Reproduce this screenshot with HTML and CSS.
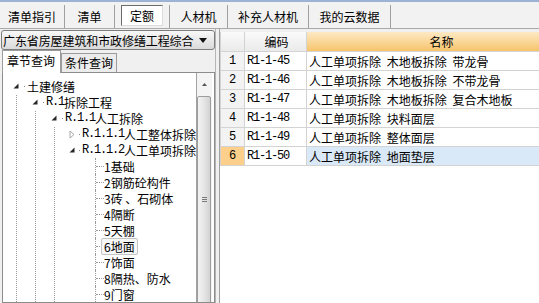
FILE: index.html
```html
<!DOCTYPE html>
<html lang="zh-CN">
<head>
    <meta charset="UTF-8">
    <title>定额</title>
    <link rel="stylesheet" href="styles.css">
</head>
<body>
    <div class="topbar">
        <div class="tab t1">清单指引</div>
        <div class="tab t2">清单</div>
        <div class="tab t3 on"><span>定额</span></div>
        <div class="tab t4">人材机</div>
        <div class="tab t5">补充人材机</div>
        <div class="tab t6">我的云数据</div>
    </div>

    <div class="main">
        <div class="left">
            <div class="combo">
                <span>广东省房屋建筑和市政修缮工程综合</span>
                <svg width="8" height="5" viewBox="0 0 8 5"><polygon points="0,0 8,0 4,5" fill="#111"/></svg>
            </div>
            <div class="qtabs">
                <div class="qtab on">章节查询</div>
                <div class="qtab">条件查询</div>
            </div>
            <div class="tree">
                <div class="nodes">
                    <ul>
                        <li>
                            <div class="row"><span class="tg"><svg width="6" height="6" viewBox="0 0 6 6"><polygon points="5.5,0.5 5.5,5.5 0.5,5.5" fill="#262626"/></svg></span><span class="dot"></span>土建修缮</div>
                            <ul>
                                <li>
                                    <div class="row"><span class="tg"><svg width="6" height="6" viewBox="0 0 6 6"><polygon points="5.5,0.5 5.5,5.5 0.5,5.5" fill="#262626"/></svg></span><span class="dot"></span><span class="code">R.1</span>拆除工程</div>
                                    <ul>
                                        <li>
                                            <div class="row"><span class="tg"><svg width="6" height="6" viewBox="0 0 6 6"><polygon points="5.5,0.5 5.5,5.5 0.5,5.5" fill="#262626"/></svg></span><span class="dot"></span><span class="code">R.1.1</span>人工拆除</div>
                                            <ul class="l3">
                                                <li>
                                                    <div class="row"><span class="tg"><svg width="6" height="9" viewBox="0 0 6 9"><polygon points="1,1 5,4.5 1,8" fill="#fff" stroke="#a8a8a8"/></svg></span><span class="dot"></span><span class="code">R.1.1.1</span>人工整体拆除</div>
                                                </li>
                                                <li class="last">
                                                    <div class="row"><span class="tg"><svg width="6" height="6" viewBox="0 0 6 6"><polygon points="5.5,0.5 5.5,5.5 0.5,5.5" fill="#262626"/></svg></span><span class="dot"></span><span class="code">R.1.1.2</span>人工单项拆除</div>
                                                    <ul class="leaves">
                                                        <li><div class="row"><span class="dash"></span>1基础</div></li>
                                                        <li><div class="row"><span class="dash"></span>2钢筋砼构件</div></li>
                                                        <li><div class="row"><span class="dash"></span>3砖 、石砌体</div></li>
                                                        <li><div class="row"><span class="dash"></span>4隔断</div></li>
                                                        <li><div class="row"><span class="dash"></span>5天棚</div></li>
                                                        <li><div class="row"><span class="dash"></span><span class="focus">6地面</span></div></li>
                                                        <li><div class="row"><span class="dash"></span>7饰面</div></li>
                                                        <li><div class="row"><span class="dash"></span>8隔热、防水</div></li>
                                                        <li><div class="row"><span class="dash"></span>9门窗</div></li>
                                                    </ul>
                                                </li>
                                            </ul>
                                        </li>
                                    </ul>
                                </li>
                            </ul>
                        </li>
                    </ul>
                </div>
                <div class="vscroll">
                    <div class="up"><svg width="5" height="3" viewBox="0 0 5 3"><polygon points="0,3 2.5,0 5,3" fill="#555"/></svg></div>
                    <div class="thumb"><span class="grip"></span></div>
                </div>
            </div>
        </div>

        <div class="split"></div>

        <div class="right">
            <div class="gridwrap">
                <table class="grid">
                    <colgroup><col class="c-num"><col class="c-code"><col class="c-name"></colgroup>
                    <tr class="head">
                        <th></th>
                        <th>编码</th>
                        <th class="cur">名称</th>
                    </tr>
                    <tr><td class="num">1</td><td class="code">R1-1-45</td><td>人工单项拆除 木地板拆除 带龙骨</td></tr>
                    <tr><td class="num">2</td><td class="code">R1-1-46</td><td>人工单项拆除 木地板拆除 不带龙骨</td></tr>
                    <tr><td class="num">3</td><td class="code">R1-1-47</td><td>人工单项拆除 木地板拆除 复合木地板</td></tr>
                    <tr><td class="num">4</td><td class="code">R1-1-48</td><td>人工单项拆除 块料面层</td></tr>
                    <tr><td class="num">5</td><td class="code">R1-1-49</td><td>人工单项拆除 整体面层</td></tr>
                    <tr class="sel"><td class="num">6</td><td class="code">R1-1-50</td><td class="name">人工单项拆除 地面垫层</td></tr>
                </table>
            </div>
        </div>
    </div>
</body>
</html>
```

FILE: styles.css
```css
body {
    margin: 0;
    width: 539px;
    height: 303px;
    overflow: hidden;
    background-color: #f0f0f0;
    font-family: "Noto Sans CJK SC", sans-serif;
    font-size: 12px;
    color: #000;
}

/* top tabs */
.topbar {
    display: flex;
    height: 26px;
    border-top: 2px solid #9db3d4;
    border-bottom: 1px solid #a9a9a9;
    background-color: #f2f2f2;
}
.tab {
    display: flex;
    align-items: center;
    justify-content: center;
    box-sizing: border-box;
    border-right: 1px solid #a0a0a0;
    margin: 3px 0 0;
}
.t1 { width: 65px; }
.t2 { width: 50px; }
.t3 { width: 55px; }
.t4 { width: 58px; }
.t5 { width: 81px; }
.t6 { width: 82px; }
.tab.on {
    align-items: flex-start;
}
.tab.on span {
    padding: 1px 8px 0;
    height: 18px;
    line-height: 18px;
    background-color: #fff;
    border: 1px solid;
    border-color: #6b6b6b #dcdcdc #dcdcdc #6b6b6b;
}

.main {
    display: flex;
    height: 274px;
}

/* left side */
.left {
    width: 214px;
    padding: 1px 0 0 1px;
    display: flex;
    flex-direction: column;
}
.combo {
    display: flex;
    align-items: center;
    justify-content: space-between;
    box-sizing: border-box;
    height: 20px;
    padding: 0 7px 0 1px;
    border: 1px solid #7c7c7c;
    border-radius: 3px;
    background: linear-gradient(to bottom, #f8f8f8, #dadada);
}
.combo span {
    letter-spacing: -0.1px;
}
.qtabs {
    display: flex;
    align-items: flex-end;
    height: 22px;
    padding-left: 1px;
}
.qtab {
    height: 18px;
    line-height: 18px;
    padding: 0 3px;
    border: 1px solid #9c9c9c;
    border-bottom: none;
    background-color: #ececec;
}
.qtab.on {
    height: 22px;
    line-height: 20px;
    padding: 0 5px 0 4px;
    background-color: #fff;
    position: relative;
    top: 1px;
}
.tree {
    flex: 1;
    display: flex;
    margin-left: 1px;
    border: 1px solid #8c8c8c;
    background-color: #fff;
    overflow: hidden;
}
.nodes {
    flex: 1;
    overflow: hidden;
    padding-top: 5px;
    white-space: nowrap;
}
.nodes ul {
    list-style: none;
    margin: 0 0 0 18px;
    padding: 0;
}
.nodes > ul {
    margin-left: 13px;
}
.nodes li {
    border-left: 1px dotted #9a9a9a;
}
.nodes li.last {
    border-left-color: transparent;
}
.nodes ul.leaves {
    margin-left: 21px;
}
.row {
    display: flex;
    align-items: center;
    height: 16px;
    margin-left: -6px;
}
.tg {
    display: flex;
    align-items: center;
    justify-content: center;
    width: 10px;
    height: 16px;
    background-color: #fff;
}
.dot {
    width: 1px;
    height: 1px;
    margin: 0 2px 0 3px;
    background-color: #8a8a8a;
}
.code {
    font-family: "Liberation Mono", monospace;
    font-size: 12px;
    letter-spacing: -1.2px;
    word-spacing: 0;
}
.leaves .row {
    margin-left: 0;
}
.dash {
    width: 8px;
    border-top: 1px dotted #9a9a9a;
}
.focus {
    margin-left: -3px;
    padding: 0 2px;
    line-height: 15px;
    border: 1px solid #c4c4c4;
    border-radius: 2px;
    background-color: #f7f7f7;
}

/* scrollbar */
.vscroll {
    width: 15px;
    margin-right: 2px;
    border-left: 1px solid #a3a3a3;
    background-color: #f4f4f4;
}
.up {
    display: flex;
    align-items: center;
    justify-content: center;
    height: 23px;
}
.thumb {
    display: flex;
    justify-content: center;
    height: 230px;
    margin: 0 1px 0 0;
    border: 1px solid #9d9d9d;
    border-radius: 2px;
    background: linear-gradient(to right, #f3f3f3, #e4e4e4 55%, #d2d2d2);
}
.grip {
    width: 5px;
    height: 5px;
    margin-top: 100px;
    background: linear-gradient(to bottom, #7a7a7a 1px, transparent 1px, transparent 2px, #7a7a7a 2px, #7a7a7a 3px, transparent 3px, transparent 4px, #7a7a7a 4px);
}

.split {
    width: 3px;
    border-left: 1px solid #b5b5b5;
}

/* right grid */
.right {
    flex: 1;
    padding-top: 3px;
    border-left: 1px solid #a0a0a0;
    display: flex;
    overflow: hidden;
}
.gridwrap {
    flex: 1;
    background-color: #fff;
    overflow: hidden;
}
.grid {
    border-collapse: collapse;
    table-layout: fixed;
    width: 354px;
    font-size: 12px;
    word-spacing: 3px;
}
.c-num { width: 24px; }
.c-code { width: 62px; }
.c-name { width: 268px; }
.grid th,
.grid td {
    height: 18px;
    padding: 0 0 0 2px;
    border: 1px solid #d3d3d3;
    white-space: nowrap;
    overflow: hidden;
    text-align: left;
    font-weight: normal;
}
.grid th {
    height: 19px;
    text-align: center;
    background: linear-gradient(to bottom, #fafafa, #eaeaea);
    border-top: none;
}
.grid th.cur {
    background: linear-gradient(to bottom, #fde9c5, #f6c46b);
}
.grid td.num {
    padding: 0;
    text-align: center;
    background-color: #f3f3f3;
    font-family: "Liberation Mono", monospace;
    font-size: 12px;
}
.sel td.num {
    background-color: #fcd08b;
}
.sel td.name {
    background-color: #dae9f7;
}
```
